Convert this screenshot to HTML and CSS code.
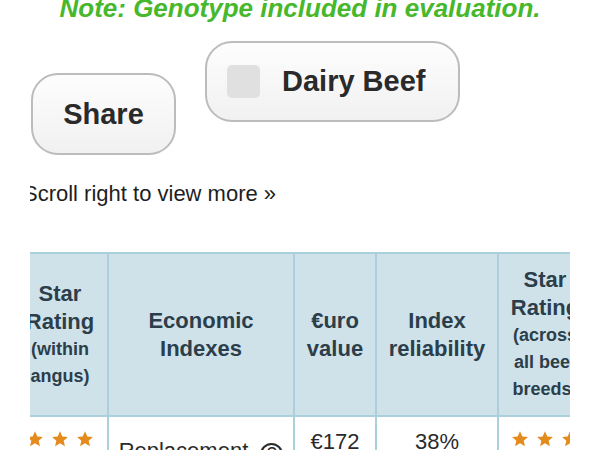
FILE: index.html
```html
<!DOCTYPE html>
<html lang="en">
<head>
<meta charset="utf-8">
<title>Evaluation</title>
<link rel="stylesheet" href="styles.css">
</head>
<body>
<p class="note">Note: Genotype included in evaluation.</p>
<div class="actions">
  <button class="btn share">Share</button>
  <label class="btn toggle"><span class="box"></span><span>Dairy Beef</span></label>
</div>
<div class="scroller">
  <p class="hint">Scroll right to view more »</p>
  <table class="grid">
    <colgroup>
      <col class="c1"><col class="c2"><col class="c3"><col class="c4"><col class="c5">
    </colgroup>
    <thead>
      <tr>
        <th>Star Rating <span class="sub">(within angus)</span></th>
        <th>Economic Indexes</th>
        <th>€uro value</th>
        <th>Index reliability</th>
        <th>Star Rating <span class="sub">(across all beef breeds)</span></th>
      </tr>
    </thead>
    <tbody>
      <tr>
        <td><span class="stars">
          <svg viewBox="0 0 24 24"><path d="M12 1.5l3.1 7 7.4.7-5.6 5 1.7 7.5L12 17.8l-6.6 3.9 1.7-7.5-5.6-5 7.4-.7z"/></svg>
          <svg viewBox="0 0 24 24"><path d="M12 1.5l3.1 7 7.4.7-5.6 5 1.7 7.5L12 17.8l-6.6 3.9 1.7-7.5-5.6-5 7.4-.7z"/></svg>
          <svg viewBox="0 0 24 24"><path d="M12 1.5l3.1 7 7.4.7-5.6 5 1.7 7.5L12 17.8l-6.6 3.9 1.7-7.5-5.6-5 7.4-.7z"/></svg>
        </span></td>
        <td class="idx">Replacement <span class="help">?</span></td>
        <td>€172</td>
        <td>38%</td>
        <td><span class="stars">
          <svg viewBox="0 0 24 24"><path d="M12 1.5l3.1 7 7.4.7-5.6 5 1.7 7.5L12 17.8l-6.6 3.9 1.7-7.5-5.6-5 7.4-.7z"/></svg>
          <svg viewBox="0 0 24 24"><path d="M12 1.5l3.1 7 7.4.7-5.6 5 1.7 7.5L12 17.8l-6.6 3.9 1.7-7.5-5.6-5 7.4-.7z"/></svg>
          <svg viewBox="0 0 24 24"><path d="M12 1.5l3.1 7 7.4.7-5.6 5 1.7 7.5L12 17.8l-6.6 3.9 1.7-7.5-5.6-5 7.4-.7z"/></svg>
        </span></td>
      </tr>
    </tbody>
  </table>
</div>
</body>
</html>
```
FILE: styles.css
```css
html, body {
  margin: 0;
  padding: 0;
  background: #ffffff;
  font-family: "Liberation Sans", Arial, sans-serif;
  color: #222222;
  overflow: hidden;
}

.note {
  margin: -7px 0 0;
  font-size: 26px;
  line-height: 30px;
  font-weight: bold;
  font-style: italic;
  color: #47b82b;
  text-align: center;
}

.actions {
  display: flex;
  align-items: flex-start;
  margin-top: 18px;
  padding-left: 31px;
  gap: 29px;
}

.btn {
  box-sizing: border-box;
  display: flex;
  align-items: center;
  justify-content: center;
  border: 2px solid #bcbcbc;
  border-radius: 27px;
  background: linear-gradient(#fdfdfd, #f1f1f1);
  font-family: "Liberation Sans", Arial, sans-serif;
  font-weight: bold;
  font-size: 29px;
  color: #2a2a2a;
  padding: 0;
}

.share {
  width: 145px;
  height: 82px;
  margin-top: 32px;
}

.toggle {
  width: 255px;
  height: 81px;
  justify-content: flex-start;
  padding-left: 20px;
  gap: 22px;
}

.box {
  width: 33px;
  height: 33px;
  border-radius: 5px;
  background: #e0e0e0;
}

.scroller {
  width: 540px;
  margin: 26px 0 0 30px;
  overflow: hidden;
}

.hint {
  margin: 0 0 0 -7px;
  font-size: 22px;
  line-height: 26px;
  color: #1e1e1e;
  white-space: nowrap;
}

.grid {
  margin: 45px 0 0 -19px;
  width: 580px;
  table-layout: fixed;
  border-collapse: collapse;
  border: 2px solid #a9d0db;
}

.c1 { width: 96px; }
.c2 { width: 186px; }
.c3 { width: 82px; }
.c4 { width: 122px; }
.c5 { width: 94px; }

.grid th {
  height: 161px;
  padding: 0 8px;
  background: #cfe2ea;
  border: 2px solid #a9d0db;
  font-size: 22px;
  line-height: 28px;
  font-weight: bold;
  color: #2b3e4a;
  text-align: center;
  vertical-align: middle;
}

.sub {
  display: block;
  font-size: 18px;
  line-height: 27px;
}

.grid td {
  height: 80px;
  padding: 12px 8px 0;
  border: 2px solid #a9d0db;
  font-size: 22px;
  line-height: 26px;
  color: #2a2a2a;
  text-align: center;
  vertical-align: top;
  background: #ffffff;
}

.grid td.idx {
  padding-top: 21px;
}

.stars {
  display: flex;
  justify-content: center;
  gap: 7px;
  padding-top: 1px;
}

.stars svg {
  width: 18px;
  height: 18px;
  fill: #e38b1c;
}

.help {
  display: inline-flex;
  align-items: center;
  justify-content: center;
  box-sizing: border-box;
  width: 23px;
  height: 23px;
  margin-left: 6px;
  border: 2px solid #2a2a2a;
  border-radius: 50%;
  font-size: 18px;
  line-height: 1;
  vertical-align: -2px;
}
```
